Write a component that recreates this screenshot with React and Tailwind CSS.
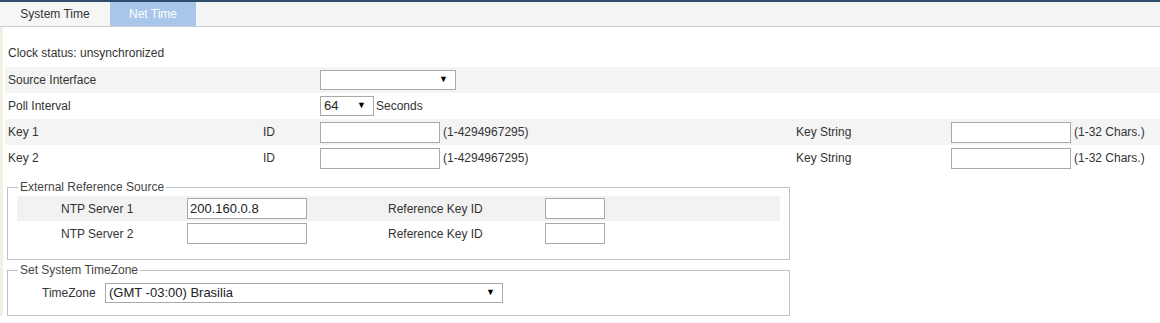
import React from 'react'

// ── NTP settings page ─────────────────────────────────────────────────────────

const FONT = { fontFamily: '"Liberation Sans", Arial, sans-serif' }

function Box({ w, value }) {
  return (
    <div className={`${w} h-[21px] border border-[#a9a9a9] bg-white px-[2px] text-[13px] leading-[19px] text-[#222]`}>
      {value}
    </div>
  )
}

function Select({ w, value }) {
  return (
    <div className={`${w} h-[20px] border border-[#a9a9a9] bg-white pl-[3px] pr-[7px] flex items-center justify-between text-[13px] text-[#222]`}>
      <span>{value}</span>
      <span className="text-[9px] text-black">▼</span>
    </div>
  )
}

function Row({ gray, children }) {
  return (
    <div className={`h-[26px] flex items-center pl-[3px] ${gray ? 'bg-[#f4f4f4]' : ''}`}>
      {children}
    </div>
  )
}

function KeyRow({ n, gray }) {
  return (
    <Row gray={gray}>
      <span className="w-[255px]">Key {n}</span>
      <span className="w-[57px]">ID</span>
      <Box w="w-[120px]" />
      <span className="ml-[3px] w-[353px]">(1-4294967295)</span>
      <span className="w-[155px]">Key String</span>
      <Box w="w-[120px]" />
      <span className="ml-[3px]">(1-32 Chars.)</span>
    </Row>
  )
}

export default function App() {
  return (
    <div className="w-[1160px] h-[323px] bg-white text-[12px] text-[#333] overflow-hidden" style={FONT}>
      {/* tab bar */}
      <div className="h-[27px] border-t-2 border-[#2f4d6e] border-b border-b-[#cfcfcf] bg-[#f4f4f4] flex">
        <div className="w-[110px] flex items-center justify-center text-[12px] text-[#333] bg-[#f6f6f6]">System Time</div>
        <div className="w-[86px] flex items-center justify-center text-[12px] text-white bg-[#a8c5ea]">Net Time</div>
      </div>

      <div className="border-l-[3px] border-[#f3f0e6] pl-[2px] pt-[19px]">
        <div className="pl-[3px] h-[21px] leading-[14px]">Clock status: unsynchronized</div>

        <Row gray>
          <span className="w-[312px]">Source Interface</span>
          <Select w="w-[136px]" value="" />
        </Row>
        <Row>
          <span className="w-[312px]">Poll Interval</span>
          <Select w="w-[54px]" value="64" />
          <span className="ml-[2px]">Seconds</span>
        </Row>
        <KeyRow n={1} gray />
        <KeyRow n={2} />

        {/* External Reference Source */}
        <fieldset className="mt-[7px] ml-[2px] w-[783px] border border-[#b9c3cb] px-[9px] pb-[13px]">
          <legend className="ml-[1px] px-[2px] text-[12px] text-[#444]">External Reference Source</legend>
          <div className="h-[25px] flex items-center bg-[#f2f2f2] pl-[44px]">
            <span className="w-[126px]">NTP Server 1</span>
            <Box w="w-[120px]" value="200.160.0.8" />
            <span className="ml-[81px] w-[157px]">Reference Key ID</span>
            <Box w="w-[60px]" />
          </div>
          <div className="h-[25px] flex items-center pl-[44px]">
            <span className="w-[126px]">NTP Server 2</span>
            <Box w="w-[120px]" />
            <span className="ml-[81px] w-[157px]">Reference Key ID</span>
            <Box w="w-[60px]" />
          </div>
        </fieldset>

        {/* Set System TimeZone */}
        <fieldset className="mt-[1px] ml-[2px] w-[783px] border border-[#b9c3cb] px-[9px] pt-[3px] pb-[11px]">
          <legend className="ml-[1px] px-[2px] text-[12px] text-[#444]">Set System TimeZone</legend>
          <div className="h-[22px] flex items-center pl-[25px]">
            <span className="w-[63px]">TimeZone</span>
            <Select w="w-[398px]" value="(GMT -03:00) Brasilia" />
          </div>
        </fieldset>
      </div>
    </div>
  )
}
